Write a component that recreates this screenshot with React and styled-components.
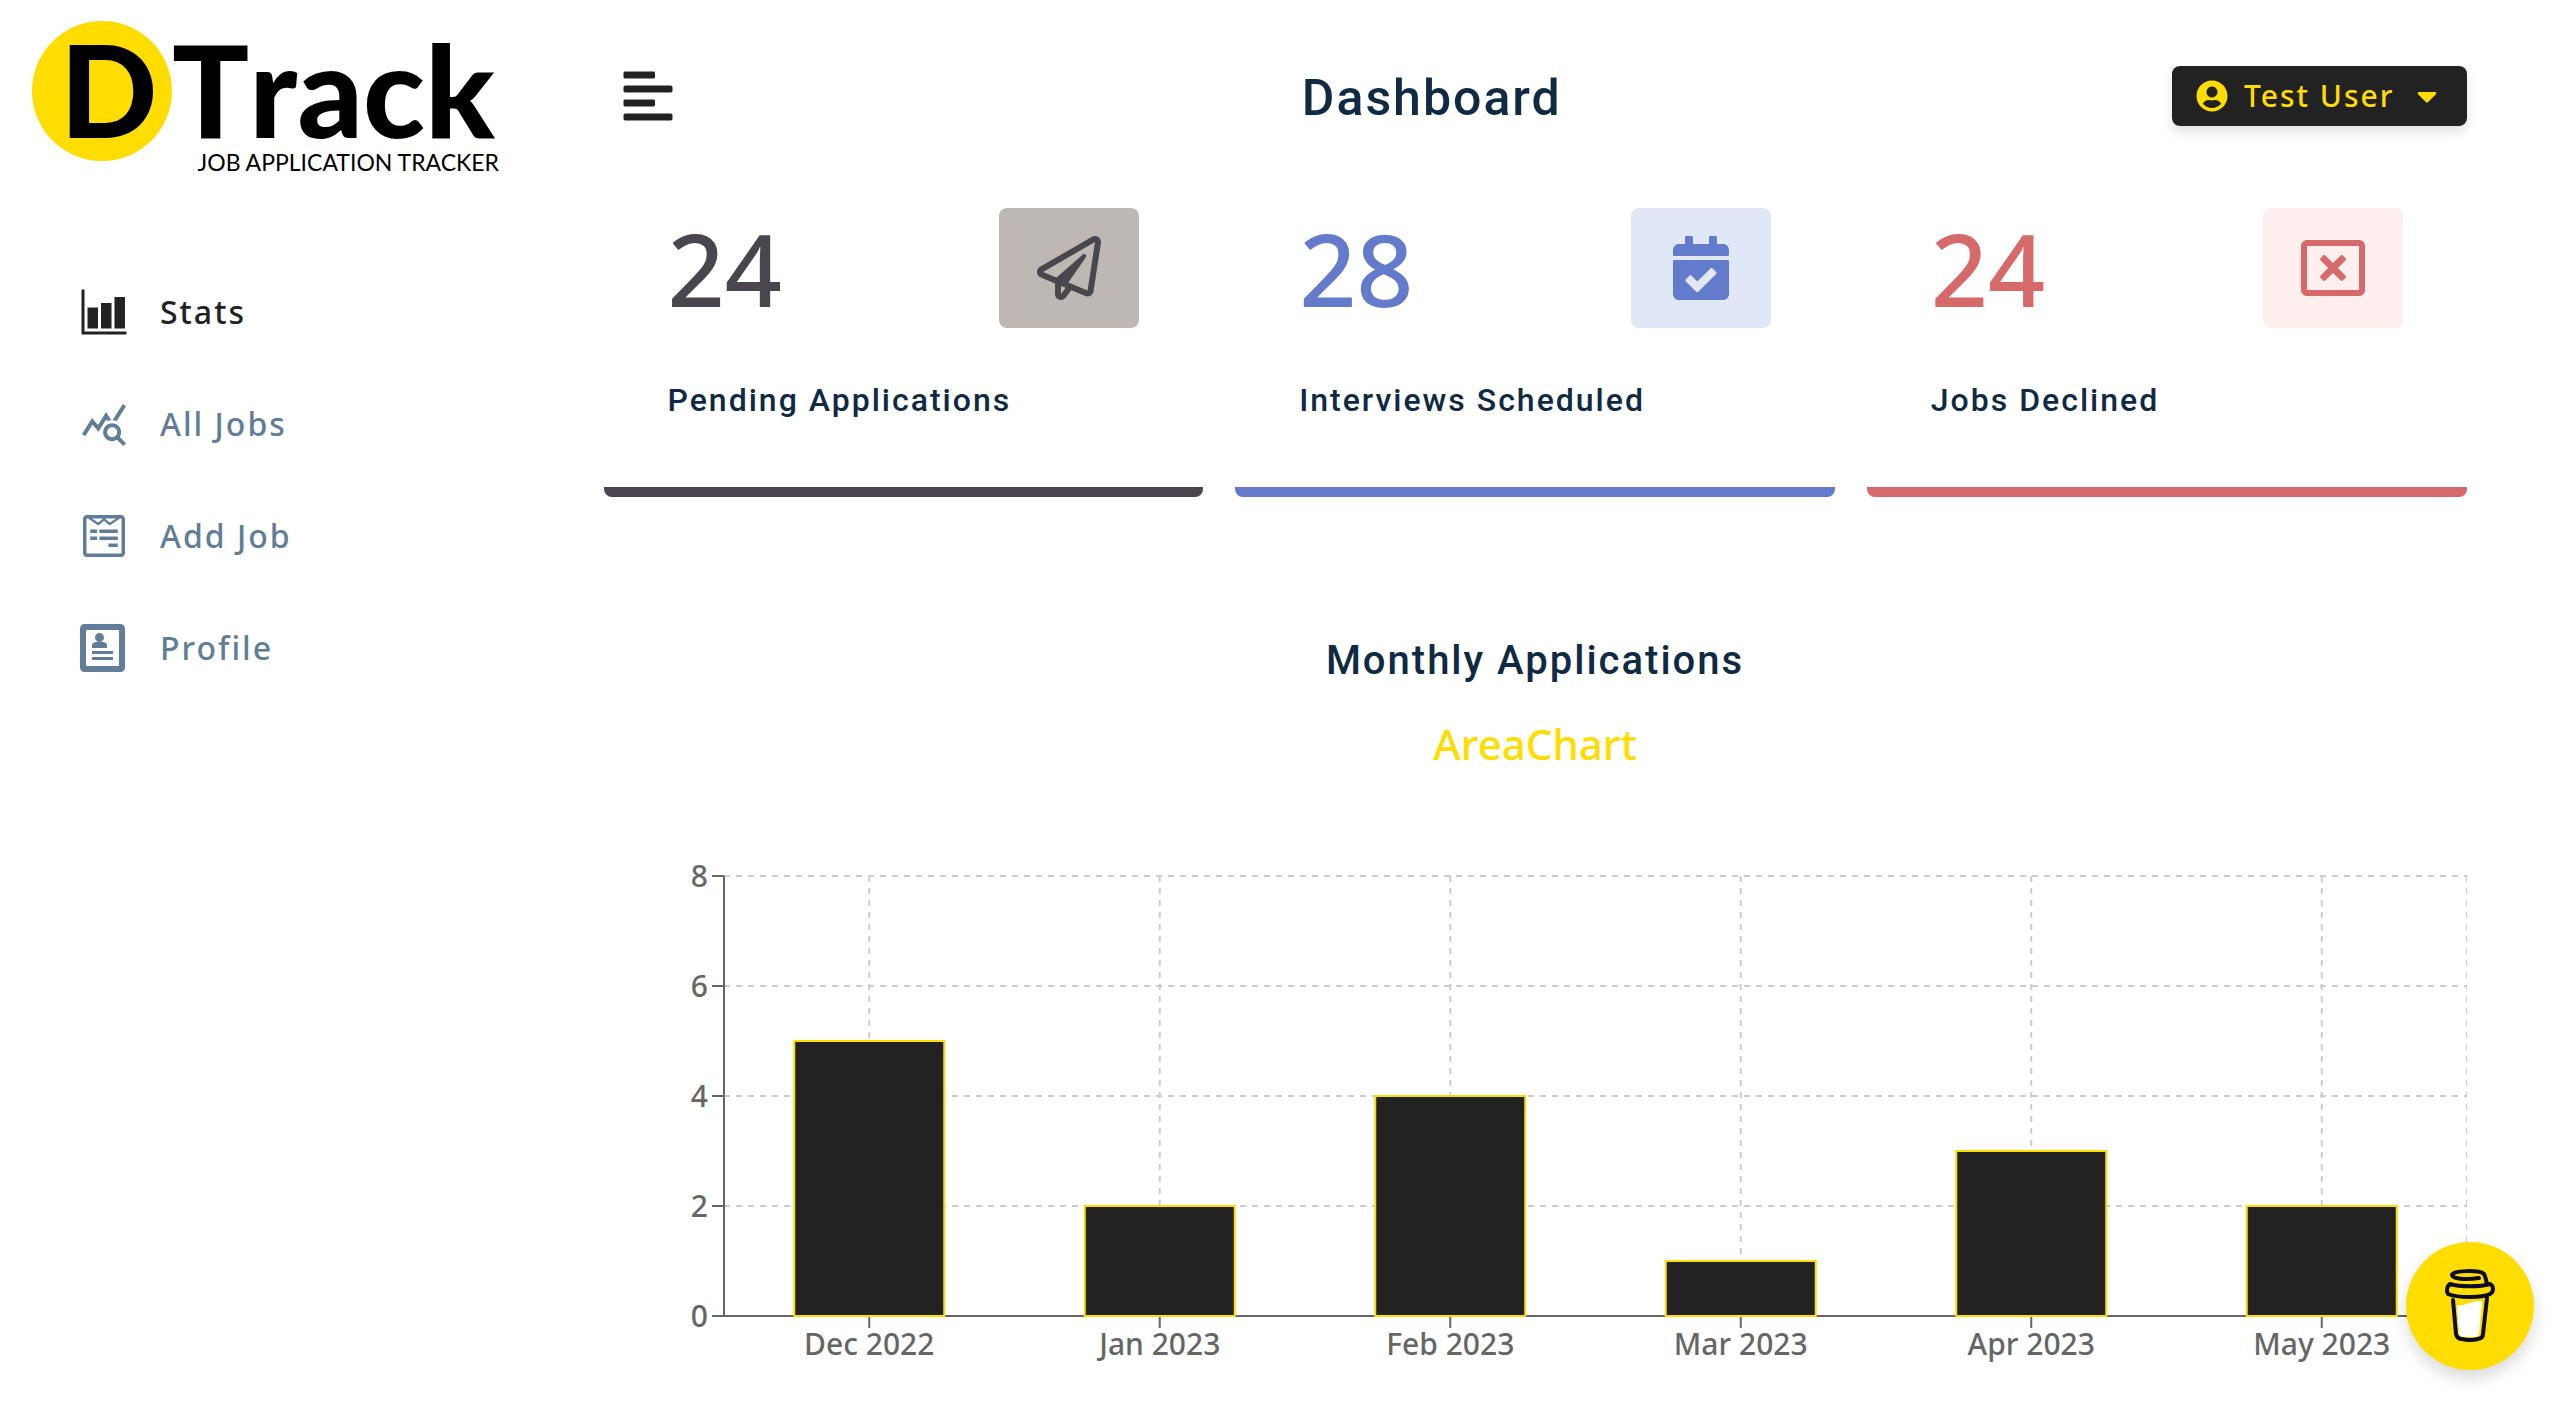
import React, { useLayoutEffect, useRef, useState } from 'react';
import styled, { createGlobalStyle } from 'styled-components';
import {
  FaAlignLeft,
  FaCalendarCheck,
  FaCaretDown,
  FaRegPaperPlane,
  FaRegWindowClose,
  FaUserCircle,
  FaWpforms,
} from 'react-icons/fa';
import { IoBarChartSharp } from 'react-icons/io5';
import { MdQueryStats } from 'react-icons/md';
import { ImProfile } from 'react-icons/im';

const bodyFont = "'Noto Sans', 'Open Sans', sans-serif";
const headingFont = "Roboto, 'Liberation Sans', sans-serif";
const yellow = '#ffdd00';
const dark = '#222222';
const navy = '#102a43';
const slate = '#627d98';

const GlobalStyle = createGlobalStyle`
  *, *::before, *::after { box-sizing: border-box; }
  body {
    margin: 0;
    background: #fff;
    color: ${dark};
    font-family: ${bodyFont};
    font-size: 32px;
    font-weight: 500;
    line-height: 48px;
  }
  h2, h3, h4, h5, p, ul { margin: 0; padding: 0; }
`;

const Layout = styled.div`
  display: grid;
  grid-template-columns: 500px 1fr;
  min-height: 100vh;
`;

const Sidebar = styled.aside`
  display: flex;
  flex-direction: column;
`;

const LogoLink = styled.a`
  display: block;
  height: 256px;
`;

const LogoWord = styled.text`
  font: 900 128px Lato, sans-serif;
  font-kerning: none;
`;

const LogoTagline = styled.text`
  font: 400 23px Lato, sans-serif;
`;

const NavList = styled.ul`
  list-style: none;
`;

const NavLink = styled.a`
  display: flex;
  align-items: center;
  gap: 32px;
  height: 112px;
  padding-left: 80px;
  color: ${(p) => (p.$active ? dark : slate)};
  letter-spacing: 2px;
  text-decoration: none;

  svg { font-size: 48px; }
`;

const Main = styled.main`
  width: 90%;
  margin: 0 auto;
`;

const Navbar = styled.header`
  display: flex;
  align-items: center;
  justify-content: space-between;
  height: 192px;
`;

const ToggleButton = styled.button`
  display: flex;
  padding: 0 16px;
  border: 0;
  background: transparent;
  color: ${dark};
  font-size: 56px;
  cursor: pointer;
`;

const PageTitle = styled.h2`
  padding-top: 4px;
  color: ${navy};
  font: 500 50px/72px ${headingFont};
  letter-spacing: 2px;
`;

const UserButton = styled.button`
  display: flex;
  align-items: center;
  gap: 16px;
  height: 60px;
  padding: 0 24px;
  border: 0;
  border-radius: 8px;
  background: ${dark};
  color: ${yellow};
  font: 500 30px/48px ${bodyFont};
  letter-spacing: 2px;
  box-shadow: 0 6px 12px rgba(0, 0, 0, 0.12);
  cursor: pointer;

  svg { font-size: 32px; }
`;

const Stats = styled.section`
  display: grid;
  grid-template-columns: repeat(3, 1fr);
  gap: 32px;
`;

const Card = styled.article`
  padding: 16px 64px 59px;
  border-bottom: 10px solid ${(p) => p.$color};
  border-radius: 8px;
  color: ${(p) => p.$color};
`;

const CardHeader = styled.div`
  display: flex;
  justify-content: space-between;
`;

const Count = styled.span`
  font-size: 100px;
  font-weight: 500;
  line-height: 120px;
`;

const IconTile = styled.span`
  display: flex;
  align-items: center;
  justify-content: center;
  width: 140px;
  height: 120px;
  border-radius: 8px;
  background: ${(p) => p.$bg};
  font-size: 64px;
`;

const CardLabel = styled.h5`
  margin-top: 44px;
  color: ${navy};
  font: 500 32px/56px ${headingFont};
  letter-spacing: 2px;
`;

const ChartSection = styled.section`
  display: flex;
  flex-direction: column;
  align-items: center;
  margin-top: 128px;
`;

const ChartTitle = styled.h4`
  color: ${navy};
  font: 500 40px/72px ${headingFont};
  letter-spacing: 2px;
`;

const ChartToggle = styled.button`
  margin-top: 15px;
  padding: 0;
  border: 0;
  background: transparent;
  color: ${yellow};
  font: 500 42px/64px ${bodyFont};
  cursor: pointer;
`;

const ChartFrame = styled.div`
  width: 100%;
  height: 600px;

  svg { display: block; }
  text { fill: #666; font: 500 30px ${bodyFont}; }
`;

const CoffeeButton = styled.button`
  position: fixed;
  right: 36px;
  bottom: 36px;
  display: flex;
  align-items: center;
  justify-content: center;
  width: 128px;
  height: 128px;
  padding: 0;
  border: 0;
  border-radius: 50%;
  background: ${yellow};
  box-shadow: 0 8px 16px rgba(0, 0, 0, 0.15);
  cursor: pointer;
`;

const links = [
  { label: 'Stats', Icon: IoBarChartSharp, active: true },
  { label: 'All Jobs', Icon: MdQueryStats },
  { label: 'Add Job', Icon: FaWpforms },
  { label: 'Profile', Icon: ImProfile },
];

const stats = [
  { label: 'Pending Applications', count: 24, Icon: FaRegPaperPlane, color: '#49464d', bg: '#beb8b4' },
  { label: 'Interviews Scheduled', count: 28, Icon: FaCalendarCheck, color: '#647acb', bg: '#e0e8f7' },
  { label: 'Jobs Declined', count: 24, Icon: FaRegWindowClose, color: '#d66a6a', bg: '#ffeeee' },
];

const months = [
  { date: 'Dec 2022', count: 5 },
  { date: 'Jan 2023', count: 2 },
  { date: 'Feb 2023', count: 4 },
  { date: 'Mar 2023', count: 1 },
  { date: 'Apr 2023', count: 3 },
  { date: 'May 2023', count: 2 },
];

function Logo() {
  return (
    <svg width="500" height="192" viewBox="0 0 500 192" role="img" aria-label="DTrack">
      <circle cx="102" cy="91" r="70" fill={yellow} />
      <LogoWord x="60" y="138">D</LogoWord>
      <LogoWord x="172" y="138">Track</LogoWord>
      <LogoTagline x="499" y="171" textAnchor="end">JOB APPLICATION TRACKER</LogoTagline>
    </svg>
  );
}

function BarChart({ data }) {
  const frame = useRef(null);
  const [width, setWidth] = useState(0);

  useLayoutEffect(() => {
    const measure = () => setWidth(frame.current.getBoundingClientRect().width);
    measure();
    const observer = new ResizeObserver(measure);
    observer.observe(frame.current);
    return () => observer.disconnect();
  }, []);

  const left = 120;
  const top = 100;
  const bottom = 540;
  const max = 8;
  const barWidth = 150;
  const band = (width - left) / data.length;
  const center = (i) => left + band * (i + 0.5);
  const y = (value) => bottom - ((bottom - top) * value) / max;
  const ticks = [0, 2, 4, 6, 8];

  return (
    <ChartFrame ref={frame}>
      {width > 0 && (
        <svg width={width} height="600" role="img" aria-label="Monthly applications">
          <g stroke="#ccc" strokeWidth="2" strokeDasharray="6 6">
            {ticks.map((t) => <line key={t} x1={left} x2={width} y1={y(t)} y2={y(t)} />)}
            {data.map((d, i) => <line key={d.date} x1={center(i)} x2={center(i)} y1={top} y2={bottom} />)}
            <line x1={width} x2={width} y1={top} y2={bottom} />
          </g>
          <g stroke="#666" strokeWidth="2">
            <line x1={left} x2={width} y1={bottom} y2={bottom} />
            <line x1={left} x2={left} y1={top} y2={bottom} />
            {ticks.map((t) => <line key={t} x1={left - 12} x2={left} y1={y(t)} y2={y(t)} />)}
            {data.map((d, i) => <line key={d.date} x1={center(i)} x2={center(i)} y1={bottom} y2={bottom + 12} />)}
          </g>
          {ticks.map((t) => <text key={t} x={left - 16} y={y(t) + 11} textAnchor="end">{t}</text>)}
          {data.map((d, i) => <text key={d.date} x={center(i)} y={bottom + 39} textAnchor="middle">{d.date}</text>)}
          {data.map((d, i) => (
            <rect
              key={d.date}
              x={center(i) - barWidth / 2}
              y={y(d.count)}
              width={barWidth}
              height={bottom - y(d.count)}
              fill={dark}
              stroke={yellow}
              strokeWidth="2"
            />
          ))}
        </svg>
      )}
    </ChartFrame>
  );
}

function CoffeeCup() {
  return (
    <svg width="52" height="74" viewBox="0 0 52 74" fill="none" aria-hidden="true">
      <path d="M13 36 C20 38 27 31 38 32 L35 65 Q34 68 31 68 H20 Q16 68 15 65 Z" fill="#fff" />
      <g stroke="#0d0c22" strokeWidth="4" strokeLinecap="round" strokeLinejoin="round">
        <path d="M9 31 L12 65 Q13 70 18 70 Q26 72 34 70 Q39 69 39 65 L43 29" />
        <path d="M6 15 C3 17 2 22 4 25 C14 29 38 29 46 25 C50 23 50 17 46 15 C36 18 16 18 6 15 Z" />
        <path d="M35 9 C22 11 8 10 8 6 C8 1 36 1 40 5 Q41 6 43 15" />
      </g>
    </svg>
  );
}

export default function App() {
  return (
    <>
      <GlobalStyle />
      <Layout>
        <Sidebar>
          <LogoLink href="#"><Logo /></LogoLink>
          <nav>
            <NavList>
              {links.map(({ label, Icon, active }) => (
                <li key={label}>
                  <NavLink href="#" $active={active}><Icon />{label}</NavLink>
                </li>
              ))}
            </NavList>
          </nav>
        </Sidebar>
        <Main>
          <Navbar>
            <ToggleButton type="button" aria-label="Toggle sidebar"><FaAlignLeft /></ToggleButton>
            <PageTitle>Dashboard</PageTitle>
            <UserButton type="button"><FaUserCircle />Test User<FaCaretDown /></UserButton>
          </Navbar>
          <Stats>
            {stats.map(({ label, count, Icon, color, bg }) => (
              <Card key={label} $color={color}>
                <CardHeader>
                  <Count>{count}</Count>
                  <IconTile $bg={bg}><Icon /></IconTile>
                </CardHeader>
                <CardLabel>{label}</CardLabel>
              </Card>
            ))}
          </Stats>
          <ChartSection>
            <ChartTitle>Monthly Applications</ChartTitle>
            <ChartToggle type="button">AreaChart</ChartToggle>
            <BarChart data={months} />
          </ChartSection>
        </Main>
      </Layout>
      <CoffeeButton type="button" aria-label="Buy me a coffee"><CoffeeCup /></CoffeeButton>
    </>
  );
}
